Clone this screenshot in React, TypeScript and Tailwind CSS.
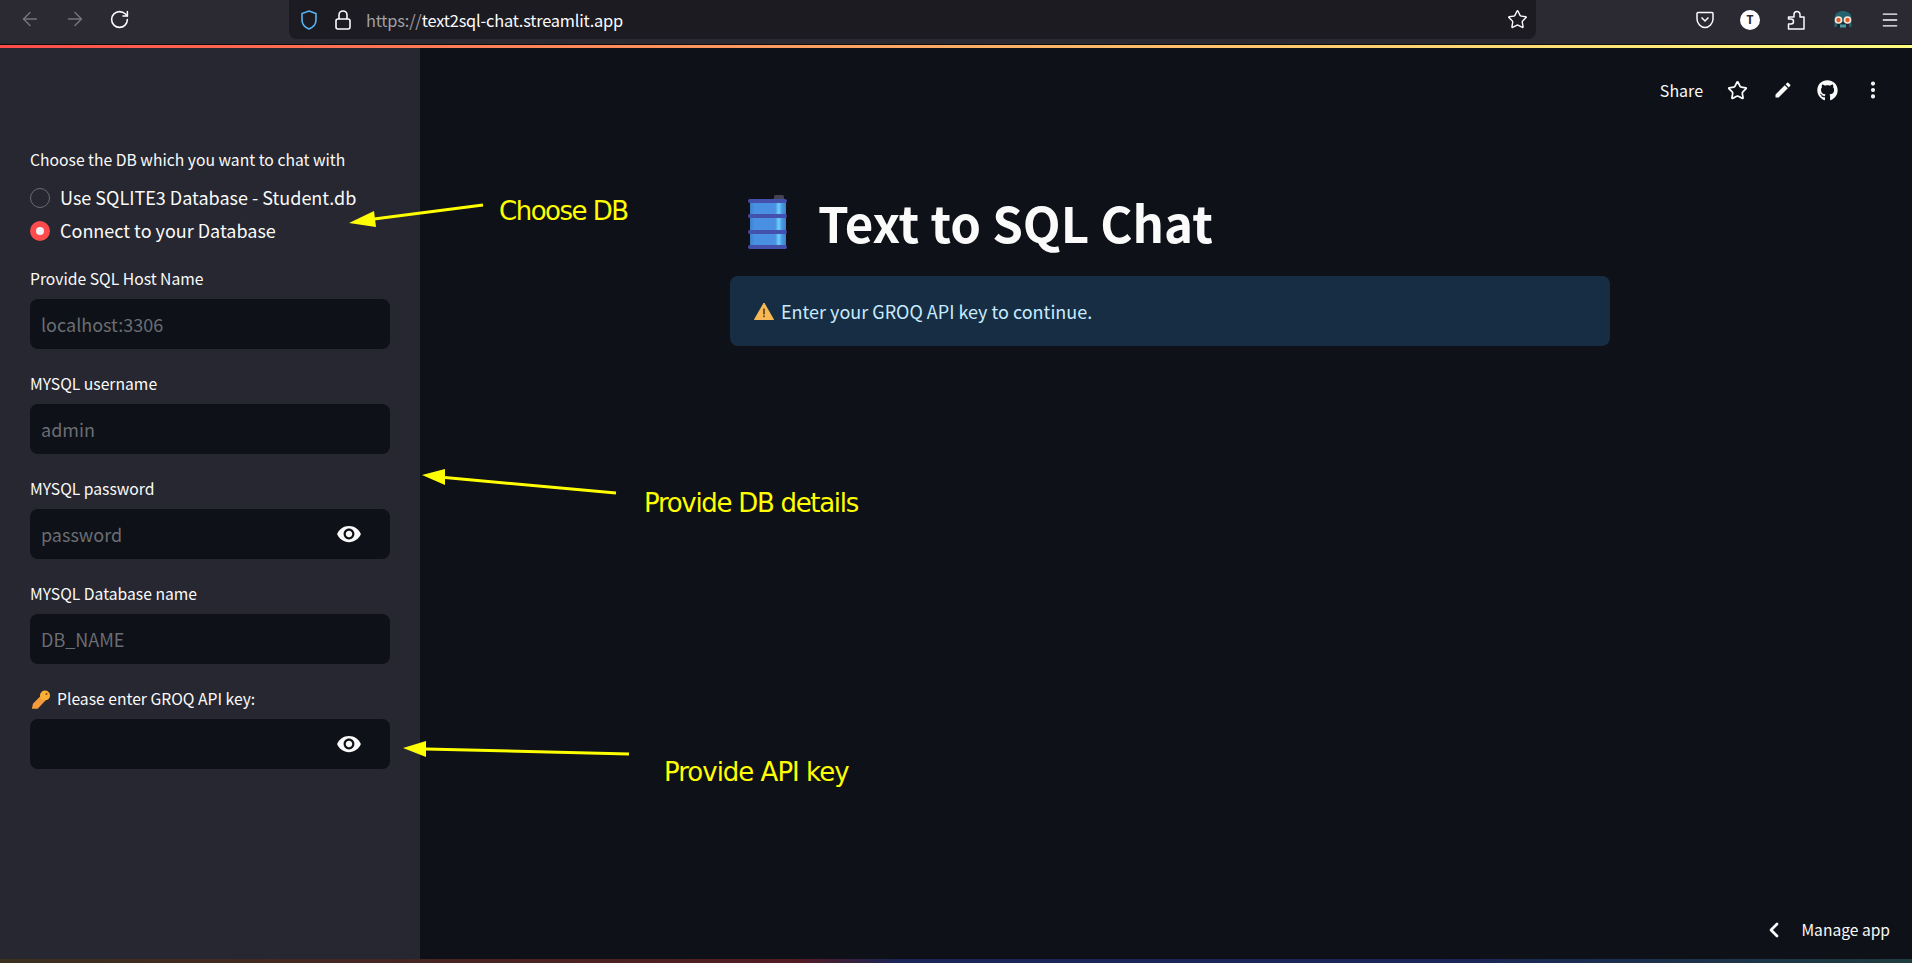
import * as React from "react"
import { ArrowLeft, ArrowRight, RotateCw, Star, Menu, EllipsisVertical, ChevronLeft } from "lucide-react"
import { FaGithub } from "react-icons/fa"

const streamlitFont = "font-['Noto_Sans_CJK_SC','Noto_Sans',sans-serif]"

interface FieldProps {
  label: React.ReactNode
  placeholder?: string
  secret?: boolean
}

function Field({ label, placeholder, secret }: FieldProps) {
  return (
    <div className="mb-[25px]">
      <div className="h-[30px] text-[15.7px] leading-[20px] text-[#fafafa]">{label}</div>
      <div className="flex h-[50px] items-center justify-between rounded-lg bg-[#0e1117] pl-[11px] pr-[28px] text-[18px] text-[#6a6d73]">
        <span>{placeholder}</span>
        {secret && <EyeIcon />}
      </div>
    </div>
  )
}

function EyeIcon() {
  return (
    <svg width="26" height="26" viewBox="0 0 24 24" fill="#fafafa">
      <path d="M12 4.5C7 4.5 2.73 7.61 1 12c1.73 4.39 6 7.5 11 7.5s9.27-3.11 11-7.5c-1.73-4.39-6-7.5-11-7.5zM12 17c-2.76 0-5-2.24-5-5s2.24-5 5-5 5 2.24 5 5-2.24 5-5 5zm0-8c-1.66 0-3 1.34-3 3s1.34 3 3 3 3-1.34 3-3-1.34-3-3-3z" />
    </svg>
  )
}

function Barrel() {
  return (
    <svg width="42" height="56" viewBox="0 0 42 56">
      <defs>
        <linearGradient id="barrelBody" x1="0" x2="1" y1="0" y2="0">
          <stop offset="0" stopColor="#3f7fc8" />
          <stop offset="0.12" stopColor="#4a90e2" />
          <stop offset="0.7" stopColor="#4a90e2" />
          <stop offset="0.8" stopColor="#6fd0fa" />
          <stop offset="0.88" stopColor="#4a9be8" />
          <stop offset="1" stopColor="#3f7fc8" />
        </linearGradient>
      </defs>
      <rect x="27" y="1" width="10" height="6" rx="1.5" fill="#454352" />
      <rect x="3" y="6" width="36" height="49" fill="url(#barrelBody)" />
      <rect x="1" y="5" width="39" height="4" rx="2" fill="#4350ac" />
      <rect x="1" y="20" width="39" height="4" rx="2" fill="#4350ac" />
      <rect x="1" y="36" width="39" height="4" rx="2" fill="#4350ac" />
      <rect x="1" y="51" width="39" height="4" rx="2" fill="#4350ac" />
    </svg>
  )
}

function KeyEmoji() {
  return (
    <svg width="20" height="20" viewBox="0 0 20 20" className="ml-[2px]">
      <path d="M10 8 L2.5 15.5 L2 18 L5 18 L11.5 11" fill="none" stroke="#f59a3c" strokeWidth="3.4" strokeLinecap="round" />
      <circle cx="13" cy="6.5" r="5" fill="#fbb034" />
      <circle cx="14.5" cy="5" r="1" fill="#7a4b10" />
    </svg>
  )
}

function BrowserBar() {
  return (
    <div className="flex h-[44px] shrink-0 items-start bg-[#2b2a33] font-['Noto_Sans','Liberation_Sans',sans-serif]">
      <div className="flex h-[39px] w-[289px] items-center gap-[23px] pl-[19px] pb-[1px]">
        <ArrowLeft size={22} strokeWidth={1.6} className="text-[#75747b]" />
        <ArrowRight size={22} strokeWidth={1.6} className="text-[#75747b]" />
        <RotateCw size={21} strokeWidth={1.8} className="text-[#fbfbfe]" />
      </div>
      <div className="flex h-[39px] w-[1247px] items-center rounded-b-lg bg-[#1c1b22] pl-[10px] pr-[6px]">
        <svg width="20" height="22" viewBox="0 0 20 22" fill="none" className="text-[#58b4f0]">
          <path d="M10 2 L17 4.5 V11 C17 15.5 13.5 18.5 10 20 C6.5 18.5 3 15.5 3 11 V4.5 Z" stroke="currentColor" strokeWidth="1.6" />
        </svg>
        <svg width="18" height="22" viewBox="0 0 18 22" fill="none" stroke="#fbfbfe" strokeWidth="1.6" className="ml-[15px]">
          <rect x="2" y="10" width="14" height="10" rx="2" />
          <path d="M5 10 V6 a4 4 0 0 1 8 0 V10" />
        </svg>
        <span className={`ml-[14px] mt-[2px] text-[16.4px] tracking-[-0.2px] text-[#a0a0a4] ${streamlitFont}`}>
          https://<span className="text-[#fbfbfe]">text2sql-chat.streamlit.app</span>
        </span>
        <Star size={21} strokeWidth={1.6} className="ml-auto mr-[2px] text-[#fbfbfe]" />
      </div>
      <div className="flex h-[39px] flex-1 items-center justify-end gap-[26px] pr-[12px]">
        <svg width="18" height="18" viewBox="0 0 18 18" fill="none" className="text-[#fbfbfe]">
          <path d="M2 1.5 H16 C16.6 1.5 17 2 17 2.5 V8 C17 12.5 13 16.5 9 16.5 C5 16.5 1 12.5 1 8 V2.5 C1 2 1.4 1.5 2 1.5 Z" stroke="currentColor" strokeWidth="1.5" />
          <path d="M5.5 6.5 L9 10 L12.5 6.5" stroke="currentColor" strokeWidth="1.5" />
        </svg>
        <div className="flex h-[20px] w-[20px] items-center justify-center rounded-full bg-white text-[12px] font-bold text-[#2b2a33]">T</div>
        <svg width="20" height="20" viewBox="0 0 20 20" fill="none" stroke="#fbfbfe" strokeWidth="1.5" strokeLinejoin="round">
          <path d="M2.5 7 H8 V4.5 a3 3 0 0 1 6 0 V7 H18 V19 H2.5 V14 H5 a2.5 2.5 0 0 0 0-5 H2.5 Z" />
        </svg>
        <svg width="22" height="22" viewBox="0 0 22 22">
          <path d="M2.5 18 V9 C2.5 4 7 2 11 2 C15 2 19.5 4 19.5 9 V18 Z" fill="#22636f" />
          <path d="M5 13 H17 V19 H5 Z" fill="#1c2a30" />
          <rect x="8" y="15.5" width="6" height="3" fill="#4c9aa8" />
          <circle cx="6.5" cy="11" r="3.8" fill="#f5e8dc" />
          <circle cx="15.5" cy="11" r="3.8" fill="#f5e8dc" />
          <circle cx="6.5" cy="11" r="2.2" fill="#df5b2e" />
          <circle cx="15.5" cy="11" r="2.2" fill="#df5b2e" />
        </svg>
        <Menu size={20} strokeWidth={1.6} className="text-[#fbfbfe]" />
      </div>
    </div>
  )
}

function Sidebar() {
  return (
    <aside className="w-[420px] shrink-0 bg-[#262730] pl-[30px] pr-[30px] pt-[102px]">
      <div className="h-[31px] text-[15.7px] leading-[20px] text-[#fafafa]">Choose the DB which you want to chat with</div>
      <div className="flex h-[33px] items-center gap-[10px] text-[18px] text-[#fafafa]">
        <span className="h-5 w-5 rounded-full border border-[#6b6c73] bg-[#262730]" />
        Use SQLITE3 Database - Student.db
      </div>
      <div className="flex h-[33px] items-center gap-[10px] text-[18px] text-[#fafafa]">
        <span className="flex h-5 w-5 items-center justify-center rounded-full bg-[#ff4b4b]">
          <span className="h-2 w-2 rounded-full bg-[#f0f2f6]" />
        </span>
        Connect to your Database
      </div>
      <div className="mt-[22px]">
        <Field label="Provide SQL Host Name" placeholder="localhost:3306" />
        <Field label="MYSQL username" placeholder="admin" />
        <Field label="MYSQL password" placeholder="password" secret />
        <Field label="MYSQL Database name" placeholder="DB_NAME" />
        <Field
          label={
            <span className="flex items-start gap-[5px]">
              <KeyEmoji />
              Please enter GROQ API key:
            </span>
          }
          secret
        />
      </div>
    </aside>
  )
}

function HeaderIcon({ children }: { children: React.ReactNode }) {
  return <div className="flex w-[45px] justify-center">{children}</div>
}

function Main() {
  return (
    <main className="relative flex flex-1 flex-col bg-[#0e1117]">
      <div className="flex h-[84px] items-center justify-end pr-[17px] text-[#fafafa]">
        <span className="mr-[12px] mb-[1px] text-[16px]">Share</span>
        <HeaderIcon>
          <Star size={21} strokeWidth={2} />
        </HeaderIcon>
        <HeaderIcon>
          <svg width="20" height="20" viewBox="0 0 24 24" fill="#fafafa">
            <path d="M3 17.25V21h3.75L17.81 9.94l-3.75-3.75L3 17.25zM20.71 7.04a1 1 0 000-1.41l-2.34-2.34a1 1 0 00-1.41 0l-1.83 1.83 3.75 3.75 1.83-1.83z" />
          </svg>
        </HeaderIcon>
        <HeaderIcon>
          <FaGithub size={21} />
        </HeaderIcon>
        <HeaderIcon>
          <EllipsisVertical size={22} strokeWidth={2.5} />
        </HeaderIcon>
      </div>
      <div className="ml-[310px] w-[880px]">
        <div className="mt-[62px] flex h-[56px] items-center pl-[17px]">
          <Barrel />
          <h1 className="ml-[29px] text-[49.2px] font-bold leading-none text-[#fafafa]">Text to SQL Chat</h1>
        </div>
        <div className="mt-[26px] flex h-[70px] items-center gap-[7px] rounded-lg bg-[#172d43] pl-[24px] text-[18px] text-[#c7ebff]">
          <svg width="20" height="20" viewBox="0 0 20 20">
            <path d="M10 2 L19.5 18.5 H0.5 Z" fill="#f7b955" stroke="#f7b955" strokeLinejoin="round" />
            <rect x="9.2" y="7.5" width="1.6" height="6" fill="#5a3d12" />
            <rect x="9.2" y="14.5" width="1.6" height="1.7" fill="#5a3d12" />
          </svg>
          Enter your GROQ API key to continue.
        </div>
      </div>
      <div className="absolute bottom-[17px] right-[22px] flex items-center gap-[15px] text-[#fafafa]">
        <ChevronLeft size={24} strokeWidth={2.8} />
        <span className="text-[15.6px]">Manage app</span>
      </div>
    </main>
  )
}

// Yellow notes drawn over the screenshot, their place on the canvas is the content
function Annotations() {
  return (
    <>
      <svg className="absolute left-0 top-0" width="1912" height="963" fill="#ffff00">
        <path d="M483 205 L374 219" stroke="#ffff00" strokeWidth="3" />
        <path d="M349 223 L374 211 L376 227 Z" />
        <path d="M616 493 L445 477.5" stroke="#ffff00" strokeWidth="3" />
        <path d="M422 475 L445 469 L445 485 Z" />
        <path d="M629 754 L426 749" stroke="#ffff00" strokeWidth="3" />
        <path d="M403 748 L426 741 L426 757 Z" />
      </svg>
      <span className="absolute left-[499px] top-[192px] font-['DejaVu_Sans',sans-serif] text-[26px] tracking-[-1.5px] text-[#ffff00]">Choose DB</span>
      <span className="absolute left-[644px] top-[484px] font-['DejaVu_Sans',sans-serif] text-[26px] tracking-[-1.3px] text-[#ffff00]">Provide DB details</span>
      <span className="absolute left-[664px] top-[753px] font-['DejaVu_Sans',sans-serif] text-[26px] tracking-[-1px] text-[#ffff00]">Provide API key</span>
    </>
  )
}

export default function App() {
  return (
    <div className={`relative flex h-[963px] w-[1912px] flex-col overflow-hidden bg-[#0e1117] ${streamlitFont}`}>
      <BrowserBar />
      <div className="h-[1px] shrink-0 bg-[#0c0c0d]" />
      <div className="h-[3px] shrink-0 bg-gradient-to-r from-[#ff4b4b] to-[#fffd80]" />
      <div className="flex flex-1">
        <Sidebar />
        <Main />
      </div>
      <div className="h-[4px] shrink-0 bg-[linear-gradient(90deg,#3b2f1e_0%,#521c24_42%,#1a2558_47%,#1a2558_75%,#1f3d40_100%)]" />
      <Annotations />
    </div>
  )
}
